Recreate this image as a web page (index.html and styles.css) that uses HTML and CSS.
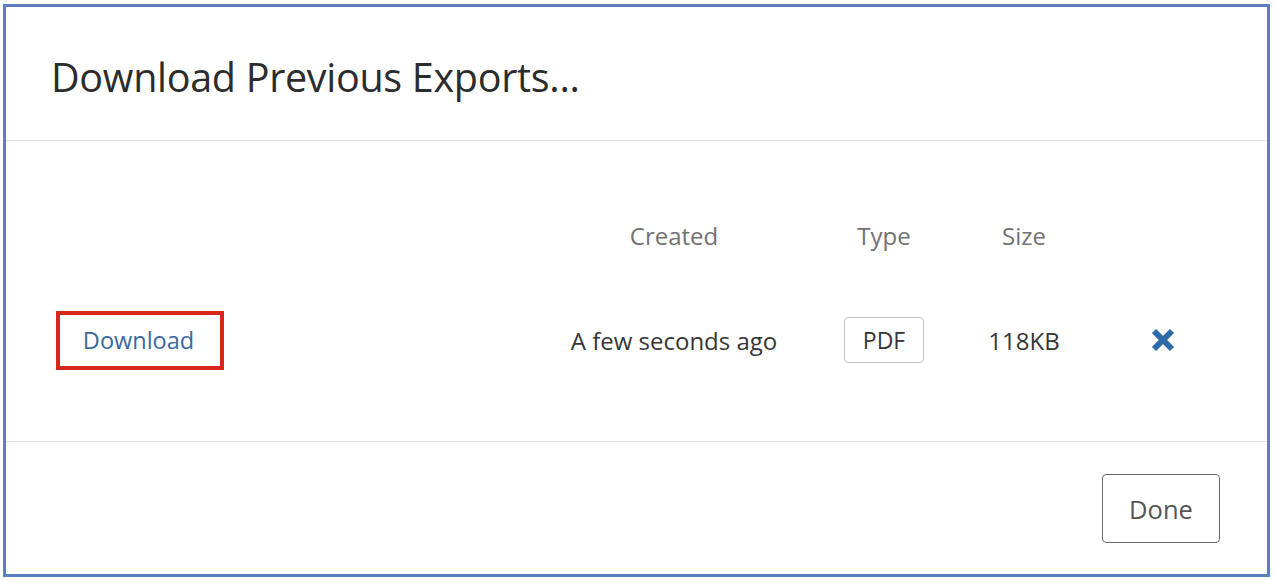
FILE: index.html
```html
<!DOCTYPE html>
<html>
<head>
<meta charset="utf-8">
<link rel="stylesheet" href="styles.css">
</head>
<body>
<div class="frame">
  <header class="dlg-head">
    <h1 class="title">Download Previous Exports...</h1>
  </header>
  <section class="dlg-body">
    <div class="grid">
      <div class="cell"></div>
      <div class="cell th">Created</div>
      <div class="cell th">Type</div>
      <div class="cell th">Size</div>
      <div class="cell"></div>

      <div class="cell left"><a class="dl-link" href="#">Download</a></div>
      <div class="cell td">A few seconds ago</div>
      <div class="cell td"><span class="badge">PDF</span></div>
      <div class="cell td">118KB</div>
      <div class="cell td">
        <svg class="x-icon" width="26" height="26" viewBox="0 0 26 26" aria-hidden="true">
          <path d="M4 4 L22 22 M22 4 L4 22" stroke="#2f6aa8" stroke-width="6" stroke-linecap="butt" fill="none"/>
        </svg>
      </div>
    </div>
  </section>
  <footer class="dlg-foot">
    <button class="done">Done</button>
  </footer>
</div>
</body>
</html>
```
FILE: styles.css
```css
html, body {
  margin: 0;
  padding: 0;
  background: #ffffff;
}
body {
  padding: 4px 6px 3px 3px;
  font-family: "Open Sans", "Noto Sans", sans-serif;
}
.frame {
  box-sizing: border-box;
  height: 573px;
  border: 3px solid #5b7fbf;
  background: #fff;
  display: flex;
  flex-direction: column;
}
.dlg-head {
  height: 133px;
  border-bottom: 1px solid #e3e3e3;
  display: flex;
  align-items: center;
  padding-left: 45px;
}
.title {
  margin: 0 0 0 0;
  padding-top: 6px;
  font-weight: 400;
  font-size: 39.5px;
  color: #2c2c2c;
  letter-spacing: -0.3px;
}
.dlg-body {
  height: 301px;
  border-bottom: 1px solid #e3e3e3;
  padding: 74px 0 0 50px;
  box-sizing: border-box;
}
.grid {
  display: grid;
  grid-template-columns: 1fr 210px 210px 70px 208px;
  grid-template-rows: 40px 60px;
  row-gap: 55px;
}
.cell {
  display: flex;
  align-items: center;
  justify-content: center;
  font-size: 24px;
}
.cell.left {
  justify-content: flex-start;
}
.th {
  color: #727272;
}
.td {
  color: #363636;
}
.dl-link {
  box-sizing: border-box;
  width: 168px;
  height: 59px;
  border: 4px solid #d9261c;
  display: flex;
  align-items: center;
  justify-content: center;
  padding-right: 3px;
  color: #3a6a9c;
  text-decoration: none;
  font-size: 23.5px;
}
.badge {
  box-sizing: border-box;
  width: 80px;
  height: 46px;
  border: 1px solid #c4c4c4;
  border-radius: 4px;
  display: flex;
  align-items: center;
  justify-content: center;
  color: #363636;
  font-size: 23px;
}
.dlg-foot {
  flex: 1;
  display: flex;
  justify-content: flex-end;
  align-items: flex-start;
  padding: 32px 47px 0 0;
}
.done {
  box-sizing: border-box;
  width: 118px;
  height: 69px;
  border: 1px solid #6b6b6b;
  border-radius: 4px;
  background: #fff;
  font-family: "Open Sans", "Noto Sans", sans-serif;
  font-size: 25.5px;
  color: #555;
}
```
